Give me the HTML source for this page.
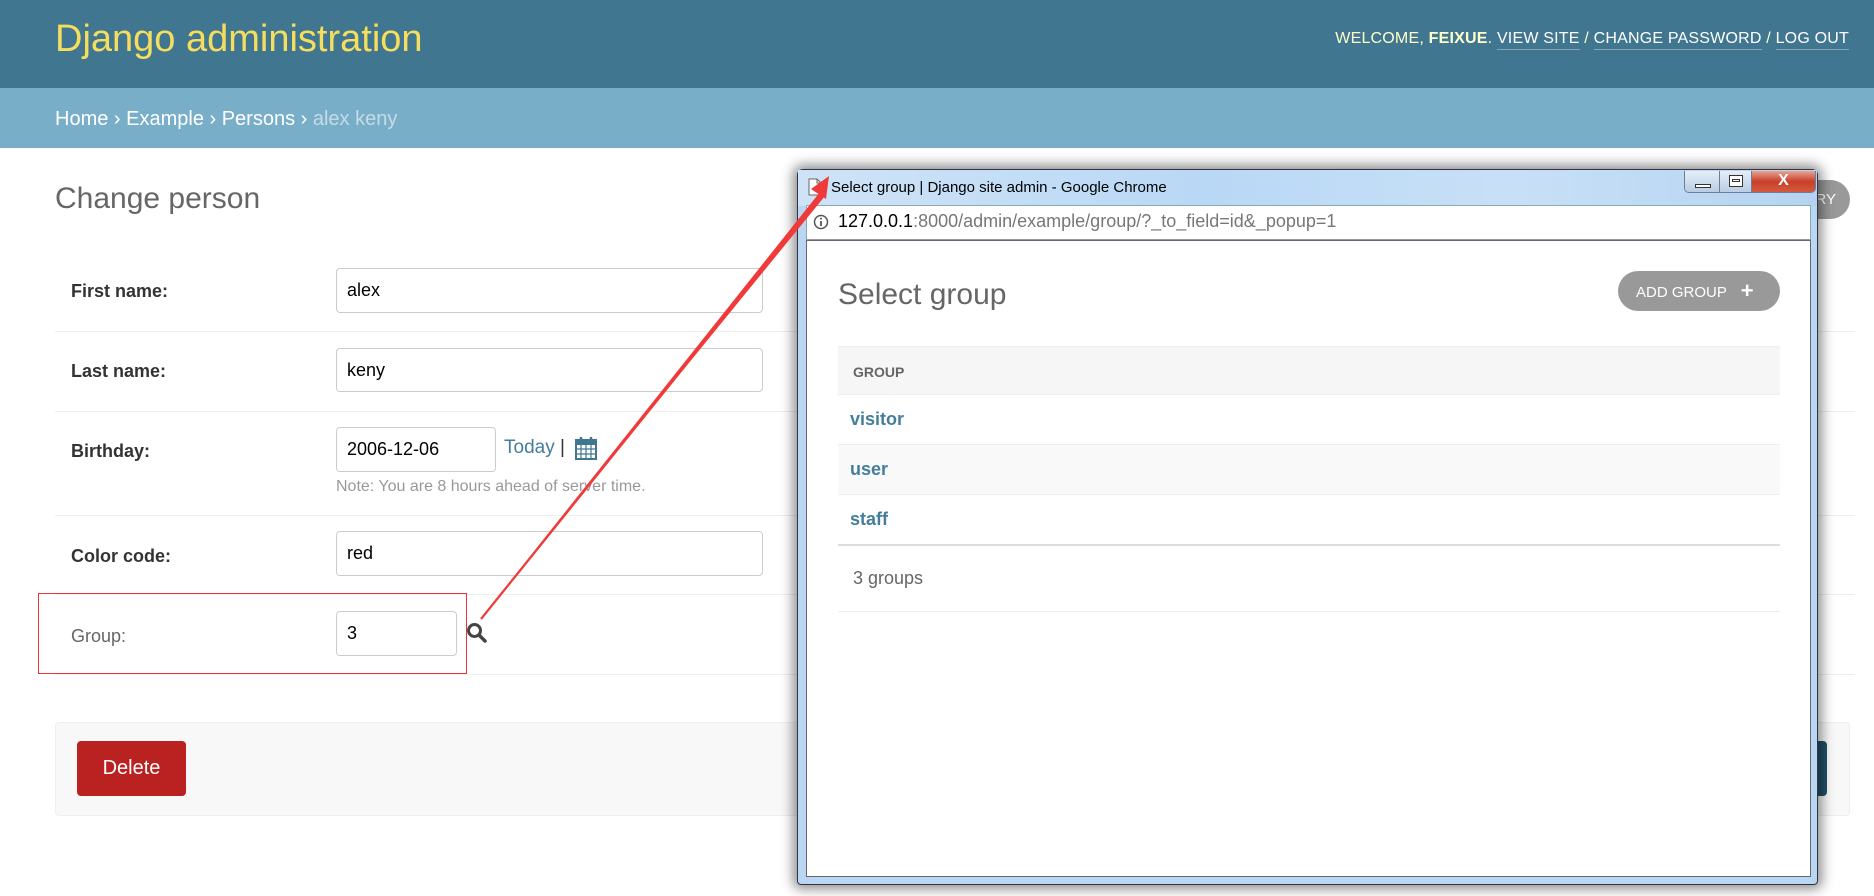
<!DOCTYPE html>
<html><head><meta charset="utf-8"><style>
*{box-sizing:border-box;margin:0;padding:0}
body{width:1874px;height:896px;overflow:hidden;background:#fff;font-family:"Liberation Sans",sans-serif;position:relative;color:#333}
.abs{position:absolute}
#hdr{left:0;top:0;width:1874px;height:88px;background:#417690}
#hdr .t{left:55px;top:18px;font-size:38px;color:#f5dd5d;font-weight:300}
#hdr .u{right:25px;top:30px;font-size:16px;color:#ffc;letter-spacing:0.2px}
#hdr .u a{color:#fff;text-decoration:none;border-bottom:1px solid rgba(255,255,255,.35);padding-bottom:2px}
#bc{left:0;top:88px;width:1874px;height:60px;background:#79aec8;color:#fff;font-size:20px;padding:20px 55px}
#bc span{color:#c4dce8}
h1{position:absolute;left:55px;top:182px;font-size:30px;font-weight:300;color:#666}
.lbl{position:absolute;left:71px;font-size:18px;font-weight:bold;color:#333}
.inp{position:absolute;border:1px solid #ccc;border-radius:4px;background:#fff;font-size:18px;padding-left:10px;display:flex;align-items:center;color:#000}
.sep{position:absolute;left:55px;width:1800px;height:1px;background:#eee}
#sub{left:55px;top:722px;width:1795px;height:94px;background:#f8f8f8;border:1px solid #eee;border-radius:4px}
#win{left:797px;top:169px;width:1021px;height:716px;background:#b9d7f3;border:1px solid #334;border-radius:6px 6px 4px 4px;box-shadow:0 0 12px 4px rgba(0,0,0,.45)}
</style></head><body>
<div id="hdr" class="abs"><div class="abs t">Django administration</div>
<div class="abs u">WELCOME, <b>FEIXUE</b>. <a>VIEW SITE</a> / <a>CHANGE PASSWORD</a> / <a>LOG OUT</a></div></div>
<div id="bc" class="abs">Home › Example › Persons › <span>alex keny</span></div>
<h1>Change person</h1>
<div class="abs" style="left:1730px;top:180px;width:120px;height:39px;border-radius:20px;background:#999;color:#fff;font-size:15px;line-height:39px;text-align:right;padding-right:14px">HISTORY</div>

<div class="lbl" style="top:281px">First name:</div>
<div class="inp" style="left:336px;top:268px;width:427px;height:45px">alex</div>
<div class="sep" style="top:331px"></div>
<div class="lbl" style="top:361px">Last name:</div>
<div class="inp" style="left:336px;top:348px;width:427px;height:44px">keny</div>
<div class="sep" style="top:411px"></div>
<div class="lbl" style="top:441px">Birthday:</div>
<div class="inp" style="left:336px;top:427px;width:160px;height:45px">2006-12-06</div>
<div class="abs" style="left:504px;top:437px;font-size:19px;color:#447e9b">Today <span style="color:#333">|</span></div>
<svg class="abs" style="left:575px;top:436px" width="22" height="24" viewBox="0 0 22 24"><rect x="1" y="4" width="20" height="19" fill="#fff" stroke="#417690" stroke-width="2"/><rect x="1" y="4" width="20" height="5" fill="#417690"/><path d="M6 1v6M16 1v6" stroke="#417690" stroke-width="2.5"/><path d="M1 13h20M1 18h20M6 9v14M11 9v14M16 9v14" stroke="#417690" stroke-width="1.2"/></svg>
<div class="abs" style="left:336px;top:478px;font-size:16px;color:#999">Note: You are 8 hours ahead of server time.</div>
<div class="sep" style="top:515px"></div>
<div class="lbl" style="top:546px">Color code:</div>
<div class="inp" style="left:336px;top:531px;width:427px;height:45px">red</div>
<div class="sep" style="top:594px"></div>
<div class="lbl" style="top:626px;font-weight:normal;color:#666">Group:</div>
<div class="inp" style="left:336px;top:611px;width:121px;height:45px">3</div>
<svg class="abs" style="left:466px;top:622px" width="22" height="22" viewBox="0 0 22 22"><circle cx="8.5" cy="8.5" r="6" fill="none" stroke="#444" stroke-width="3"/><path d="M13 13l6 6" stroke="#444" stroke-width="3.5" stroke-linecap="round"/></svg>
<div class="sep" style="top:674px"></div>
<div class="abs" style="left:38px;top:593px;width:429px;height:81px;border:1px solid #e33"></div>
<div id="sub" class="abs"></div>
<div class="abs" style="left:77px;top:741px;width:109px;height:55px;background:#ba2121;border-radius:4px;color:#fff;font-size:20px;line-height:55px;text-align:center">Delete</div>
<div class="abs" style="left:1760px;top:741px;width:67px;height:55px;background:#205067;border-radius:4px"></div>

<div id="win" class="abs">
 <div class="abs" style="left:0;top:0;width:1019px;height:36px;background:linear-gradient(90deg,#cfe3f7,#b9d8f5 40%,#c8e0f7 70%,#b5d3f0)"></div>
 <svg class="abs" style="left:10px;top:8px" width="14" height="18" viewBox="0 0 14 18"><path d="M1 1h8l4 4v12H1z" fill="#fff" stroke="#666"/><path d="M9 1v4h4" fill="none" stroke="#666"/></svg>
 <div class="abs" style="left:33px;top:9px;font-size:15px;color:#000">Select group | Django site admin - Google Chrome</div>
 <div class="abs" style="left:886px;top:1px;width:132px;height:22px;border:1px solid #6a7f99;border-top:none;border-radius:0 0 5px 5px;overflow:hidden;display:flex">
  <div style="width:35px;background:linear-gradient(#e6eef8,#b9cde4);border-right:1px solid #6a7f99;position:relative"><div class="abs" style="left:10px;top:13px;width:16px;height:4px;border:1px solid #333;background:#fff"></div></div>
  <div style="width:32px;background:linear-gradient(#e6eef8,#b9cde4);border-right:1px solid #6a7f99;position:relative"><div class="abs" style="left:9px;top:4px;width:14px;height:12px;border:1px solid #333;background:#fff"><div style="margin:3px 2px;height:3px;border:1px solid #333"></div></div></div>
  <div style="flex:1;background:linear-gradient(#e8a493,#c8402a 50%,#d55a3e);color:#fff;font-weight:bold;font-size:16px;text-align:center;line-height:20px">X</div>
 </div>
 <div class="abs" style="left:8px;top:35px;width:1005px;height:35px;background:#fff;border:1px solid #8aa;border-bottom:1px solid #999"></div>
 <svg class="abs" style="left:15px;top:44px" width="16" height="16" viewBox="0 0 16 16"><circle cx="8" cy="8" r="6.5" fill="none" stroke="#555" stroke-width="1.5"/><path d="M8 7v5" stroke="#555" stroke-width="1.8"/><circle cx="8" cy="4.6" r="1" fill="#555"/></svg>
 <div class="abs" style="left:40px;top:41px;font-size:18px;color:#000">127.0.0.1<span style="color:#777">:8000/admin/example/group/?_to_field=id&amp;_popup=1</span></div>
 <div class="abs" style="left:8px;top:70px;width:1005px;height:637px;background:#fff;border:1px solid #667"></div>
 <div class="abs" style="left:40px;top:108px;font-size:30px;font-weight:300;color:#666">Select group</div>
 <div class="abs" style="left:820px;top:101px;width:162px;height:40px;border-radius:20px;background:#999;color:#fff;font-size:15px;line-height:40px;padding-left:18px">ADD GROUP <b style="font-size:22px;margin-left:10px;vertical-align:-1px">+</b></div>
 <div class="abs" style="left:40px;top:176px;width:942px;height:49px;background:#f6f6f6;border-top:1px solid #eee;border-bottom:1px solid #eee;font-size:14px;font-weight:bold;color:#666;padding:17px 0 0 15px">GROUP</div>
 <div class="abs" style="left:40px;top:225px;width:942px;height:50px;border-bottom:1px solid #eee;font-size:18px;font-weight:bold;color:#447e9b;padding:14px 0 0 12px">visitor</div>
 <div class="abs" style="left:40px;top:275px;width:942px;height:50px;background:#f9f9f9;border-bottom:1px solid #eee;font-size:18px;font-weight:bold;color:#447e9b;padding:14px 0 0 12px">user</div>
 <div class="abs" style="left:40px;top:325px;width:942px;height:51px;border-bottom:2px solid #ddd;font-size:18px;font-weight:bold;color:#447e9b;padding:14px 0 0 12px">staff</div>
 <div class="abs" style="left:40px;top:376px;width:942px;height:66px;border-bottom:1px solid #eee;font-size:18px;color:#666;padding:22px 0 0 15px">3 groups</div>
</div>

<svg class="abs" style="left:0;top:0" width="1874" height="896"><path d="M480 619 L820 192 L825 196 Z" fill="#f03a3a"/><path d="M481 619 L826 191" stroke="#f03a3a" stroke-width="2.2"/><path d="M829 176 L811 189 L826 199 Z" fill="#f03a3a"/></svg>
</body></html>
